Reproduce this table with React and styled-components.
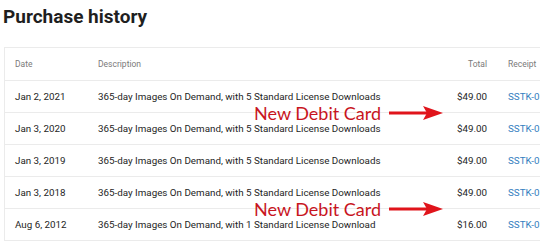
import React from 'react';
import styled, { createGlobalStyle } from 'styled-components';

const GlobalStyle = createGlobalStyle`
  html, body {
    margin: 0;
    padding: 0;
    background: #ffffff;
    overflow: hidden;
  }
  body {
    font-family: Roboto, "Liberation Sans", sans-serif;
    color: #212121;
  }
`;

const Page = styled.div`
  position: relative;
  width: 540px;
  height: 246px;
  overflow: hidden;
`;

const Title = styled.h1`
  margin: 0;
  padding: 5px 0 0 3px;
  height: 47px;
  box-sizing: border-box;
  font-size: 19px;
  font-weight: 700;
  color: #1f1f1f;
`;

const Table = styled.div`
  margin-left: 4px;
  width: 620px;
  border: 1px solid #ebebeb;
  border-right: none;
`;

const Row = styled.div`
  display: grid;
  grid-template-columns: 83px 300px 99px 21px 1fr;
  align-items: center;
  height: 32px;
  border-top: ${p => (p.$first ? 'none' : '1px solid #ebebeb')};
  box-sizing: border-box;
  font-size: ${p => (p.$head ? '8.5px' : '9.8px')};
  color: ${p => (p.$head ? '#7a7a7a' : '#1e1e1e')};
`;

const Cell = styled.div`
  padding-left: ${p => (p.$pad ? '10px' : '0')};
  text-align: ${p => (p.$right ? 'right' : 'left')};
  white-space: nowrap;
`;

const Link = styled.a`
  color: #3580c0;
  text-decoration: none;
  &:visited {
    color: #3580c0;
  }
`;

const Note = styled.div`
  position: absolute;
  left: 254px;
  top: ${p => p.$top}px;
  display: flex;
  align-items: center;
  gap: 8px;
  font-family: Lato, "Open Sans", sans-serif;
  font-size: 18px;
  color: #c8151e;
  white-space: nowrap;
`;

const rows = [
  ['Jan 2, 2021', '365-day Images On Demand, with 5 Standard License Downloads', '$49.00'],
  ['Jan 3, 2020', '365-day Images On Demand, with 5 Standard License Downloads', '$49.00'],
  ['Jan 3, 2019', '365-day Images On Demand, with 5 Standard License Downloads', '$49.00'],
  ['Jan 3, 2018', '365-day Images On Demand, with 5 Standard License Downloads', '$49.00'],
  ['Aug 6, 2012', '365-day Images On Demand, with 1 Standard License Download', '$16.00'],
];

const Arrow = () => (
  <svg width="54" height="16" viewBox="0 0 54 16">
    <rect x="0" y="6.5" width="38" height="3" fill="#e0141b" />
    <polygon points="34,1 54,8 34,15 38,8" fill="#e0141b" />
  </svg>
);

export default function App() {
  return (
    <Page>
      <GlobalStyle />
      <Title>Purchase history</Title>
      <Table>
        <Row $head $first>
          <Cell $pad>Date</Cell>
          <Cell $pad>Description</Cell>
          <Cell $right>Total</Cell>
          <Cell />
          <Cell>Receipt</Cell>
        </Row>
        {rows.map(r => (
          <Row key={r[0]}>
            <Cell $pad>{r[0]}</Cell>
            <Cell $pad>{r[1]}</Cell>
            <Cell $right>{r[2]}</Cell>
            <Cell />
            <Cell><Link href="#">SSTK-0</Link></Cell>
          </Row>
        ))}
      </Table>
      <Note $top={102}>New Debit Card<Arrow /></Note>
      <Note $top={198}>New Debit Card<Arrow /></Note>
    </Page>
  );
}
